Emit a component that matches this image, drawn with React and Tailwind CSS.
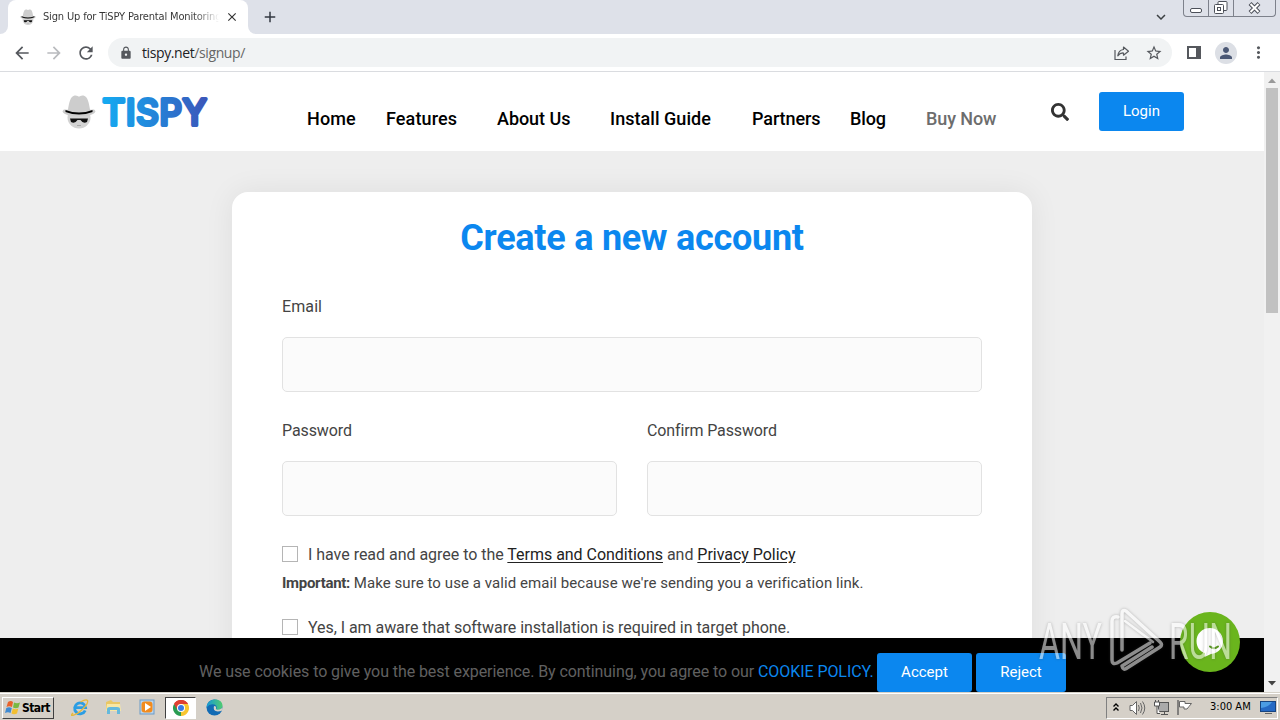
import React from 'react';
import { FaSearch } from 'react-icons/fa';
import { MdArrowBack, MdArrowForward, MdRefresh, MdLock, MdStarBorder, MdPerson, MdMoreVert, MdClose, MdAdd, MdKeyboardArrowDown } from 'react-icons/md';

function SpyFace({ className }) {
  return (
    <svg className={className} viewBox="0 0 34 34">
      <ellipse cx="17" cy="23" rx="11.500" ry="11" fill="#d3d3d3" />
      <path d="M0.5 17C2 13.500 4 16 6 15C7 9 8 2 12.500 1C15 .5 16 2 17 2C18 2 19 .5 21.500 1C26 2 27 9 28 15C30 16 32 13.500 33.500 17C31 23.500 3 23.500 .5 17Z" fill="#cdcdcd" />
      <path d="M3.500 15.500Q17 20.500 30.500 15.500V17.500Q17 22.500 3.500 17.500Z" fill="#000" />
      <path d="M8 24H26L25 27.500Q21 29.500 18.500 25.500H15.500Q13 29.500 9 27.500Z" fill="#111" />
      <path d="M15 31H19" stroke="#aaa" />
    </svg>
  );
}

function TabBar() {
  return (
    <div className="flex h-[34px] bg-[#dee1e9]">
      <div className="flex w-[8px] items-end bg-white"><div className="h-[34px] w-[8px] rounded-br-lg bg-[#dee1e9]" /></div>
      <div className="flex h-[34px] w-[240px] items-center rounded-t-lg bg-white pl-3">
        <SpyFace className="h-4 w-4 shrink-0" />
        <div className="ml-[7px] w-[176px] overflow-hidden whitespace-nowrap bg-gradient-to-r from-[#333] from-85% to-white bg-clip-text font-['DejaVu_Sans_Condensed','DejaVu_Sans',sans-serif] text-[11px] tracking-[-0.16px] text-transparent">
          Sign Up for TiSPY Parental Monitoring
        </div>
        <MdClose className="ml-[6px] h-[14px] w-[14px] text-[#333]" />
      </div>
      <div className="w-[8px] bg-white"><div className="h-[34px] w-[8px] rounded-bl-lg bg-[#dee1e9]" /></div>
      <MdAdd className="ml-[5px] mt-2 h-[18px] w-[18px] text-[#333842]" />
      <MdKeyboardArrowDown className="ml-auto mr-[13px] mt-2 h-[18px] w-[18px] text-[#3c4043]" />
      <div className="mr-[4px] flex h-[17px] w-[93px] rounded-b-[4px] border border-t-0 border-[#7d818b]">
        <div className="flex w-[25px] items-end justify-center border-r border-[#7d818b] pb-[3px]">
          <div className="h-[5px] w-[12px] rounded-[2px] border border-[#4c5059] bg-white" />
        </div>
        <div className="flex w-[25px] items-center justify-center border-r border-[#7d818b]">
          <svg className="h-[14px] w-[14px]" viewBox="0 0 14 14" fill="#fff" stroke="#4c5059">
            <rect x="4" y=".5" width="9" height="9" rx="1" /><rect x=".5" y="3.500" width="9" height="9" rx="1" /><rect x="3.500" y="6.500" width="3" height="3" />
          </svg>
        </div>
        <div className="flex flex-1 items-center justify-center">
          <svg className="h-[12px] w-[13px]" viewBox="0 0 13 12">
            <path d="M2 1.500L11 10.500M11 1.500L2 10.500" stroke="#4c5059" strokeWidth="4" />
            <path d="M2.500 2L10.500 10M10.500 2L2.500 10" stroke="#fff" strokeWidth="2" />
          </svg>
        </div>
      </div>
    </div>
  );
}

function Toolbar() {
  return (
    <div className="flex h-[38px] items-center border-b border-[#dadce0] bg-white pl-[12px] text-[#55585d]">
      <MdArrowBack className="h-5 w-5" />
      <MdArrowForward className="ml-3 h-5 w-5 text-[#b9bbbe]" />
      <MdRefresh className="ml-3 h-5 w-5" />
      <div className="ml-[12px] flex h-[29px] w-[1064px] items-center rounded-full bg-[#f1f3f4] pl-[11px] pr-[9px]">
        <MdLock className="h-[14px] w-[14px]" />
        <div className="ml-[9px] whitespace-nowrap font-['Open_Sans',sans-serif] text-[14px] tracking-[-0.4px] text-[#666]"><span className="text-[#202124]">tispy.net</span>/signup/</div>
        <svg className="ml-auto h-[16px] w-[16px]" viewBox="0 0 16 16" fill="none" stroke="currentColor" strokeWidth="1.200">
          <path d="M1 5V14.500H12V11.500" /><path d="M9.500 2L14.500 6.200L9.500 10.200V8Q6 7.700 3.800 10.800Q4.500 5 9.500 4.500Z" strokeLinejoin="round" />
        </svg>
        <MdStarBorder className="ml-[15px] h-[18px] w-[18px]" />
      </div>
      <div className="ml-[15px] h-[13px] w-[14px] border-2 border-r-[5px] border-[#55585d]" />
      <div className="ml-[14px] flex h-[22px] w-[22px] items-center justify-center rounded-full bg-[#dcdfe5]"><MdPerson className="h-[18px] w-[18px] text-[#4b5875]" /></div>
      <MdMoreVert className="ml-[12px] h-[19px] w-[19px]" />
    </div>
  );
}

function SiteHeader() {
  return (
    <header className="flex h-[79px] shrink-0 bg-white">
      <SpyFace className="ml-[62px] mt-[22px] h-[35px] w-[34px]" />
      <svg className="ml-[3px] mt-[20px] h-[44px] w-[114px] overflow-visible" viewBox="0 0 114 44">
        <defs><linearGradient id="logo" x1="0" x2="110" gradientUnits="userSpaceOnUse"><stop stopColor="#14adf3" /><stop offset=".45" stopColor="#2189dc" /><stop offset="1" stopColor="#3c54b8" /></linearGradient></defs>
        <text x="3.500" y="33" textLength="104" fontFamily="Inter, sans-serif" fontWeight="400" fontSize="35" fill="url(#logo)" stroke="url(#logo)" strokeWidth="4" strokeLinejoin="round" strokeLinecap="round">TISPY</text>
      </svg>
      <nav className="ml-[94px] mt-[33px] flex whitespace-nowrap text-[18px] font-medium leading-7 text-black">
        <a className="w-[79px] tracking-[0.12px]">Home</a>
        <a className="w-[111px] tracking-[0.12px]">Features</a>
        <a className="w-[113px] tracking-[-0.05px]">About Us</a>
        <a className="w-[142px] tracking-[0.04px]">Install Guide</a>
        <a className="w-[98px] tracking-[-0.1px]">Partners</a>
        <a className="w-[76px] tracking-[-0.1px]">Blog</a>
        <a className="w-[125px] tracking-[-0.1px] text-[#6d6d6d]">Buy Now</a>
      </nav>
      <FaSearch className="mt-[31px] h-[18px] w-[18px] text-[#333]" />
      <button className="ml-[30px] mt-[20px] h-[39px] w-[85px] rounded-[3px] bg-[#0b87ef] text-[15px] tracking-[0.05px] text-white">Login</button>
    </header>
  );
}

const field = 'h-[55px] rounded-[5px] border border-[#e2e2e2] bg-[#fbfbfb]';

function SignupCard() {
  return (
    <section className="mx-auto mt-[41px] h-[700px] w-[800px] rounded-[16px] bg-white px-[50px] pt-[24px] text-[16px] leading-6 text-[#444] shadow-[0_0_30px_rgba(0,0,0,0.07)]">
      <h1 className="whitespace-nowrap text-center text-[36px] font-bold leading-[44px] tracking-[-0.25px] text-[#0b87ef]">Create a new account</h1>
      <div className="mt-[35px] tracking-[0.1px]">Email</div>
      <div className={field + ' mt-[18px]'} />
      <div className="mt-[27px] grid grid-cols-2 gap-[30px]">
        <div><div className="tracking-[-0.1px]">Password</div><div className={field + ' mt-[18px]'} /></div>
        <div><div className="tracking-[-0.13px]">Confirm Password</div><div className={field + ' mt-[18px]'} /></div>
      </div>
      <div className="mt-[26px] flex items-center">
        <span className="h-[16px] w-[16px] border border-[#b5b5b5] bg-white" />
        <span className="ml-[10px] translate-y-px whitespace-nowrap tracking-[-0.025px]">I have read and agree to the <a className="text-[#222] underline underline-offset-2">Terms and Conditions</a> and <a className="text-[#222] underline underline-offset-2">Privacy Policy</a></span>
      </div>
      <p className="mt-[5px] whitespace-nowrap text-[15px] leading-6 tracking-[0.075px]"><b className="tracking-[-0.3px]">Important:</b> Make sure to use a valid email because we're sending you a verification link.</p>
      <div className="mt-[20px] flex items-center">
        <span className="h-[16px] w-[16px] border border-[#b5b5b5] bg-white" />
        <span className="ml-[10px] translate-y-px whitespace-nowrap tracking-[-0.05px]">Yes, I am aware that software installation is required in target phone.</span>
      </div>
    </section>
  );
}

function CookieBar() {
  return (
    <div className="flex h-[54px] shrink-0 bg-black pl-[199px] pt-[15px] text-[16px]">
      <div className="w-[678px] whitespace-nowrap leading-[38px] tracking-[-0.075px] text-[#606060]">We use cookies to give you the best experience. By continuing, you agree to our <a className="text-[#0b87ef]">COOKIE POLICY.</a></div>
      <button className="h-[39px] w-[95px] rounded-[3px] bg-[#0b87ef] text-[15px] text-white">Accept</button>
      <button className="ml-[4px] h-[39px] w-[90px] rounded-[3px] bg-[#0b87ef] text-[15px] text-white">Reject</button>
    </div>
  );
}

function Watermark() {
  return (
    <svg className="absolute left-[1032px] top-[600px] h-[80px] w-[208px] overflow-visible" viewBox="0 0 208 80" fontFamily="Roboto, sans-serif" fontWeight="400" fontSize="50" fill="#fff">
      <g opacity=".55" style={{ filter: 'drop-shadow(0 0 1.5px rgba(60,60,60,.6))' }}>
        <text x="7" y="59" textLength="63" lengthAdjust="spacingAndGlyphs">ANY</text>
        <text x="137" y="59" textLength="63" lengthAdjust="spacingAndGlyphs">RUN</text>
        <g fill="none" stroke="#fff" strokeWidth="3.500" strokeLinejoin="round" strokeLinecap="round">
          <path d="M86 17Q80 16 80 21V60Q80 65 85 63L118 43" />
          <path d="M90 50V14Q90 9 94 11L128 42Q131 45 128 47L95 68Q91 71 90 66L120 47" />
          <path d="M93 21L121 42" strokeWidth="2.500" />
        </g>
      </g>
    </svg>
  );
}

function Chat() {
  return (
    <div className="absolute left-[1180px] top-[612px] flex h-[60px] w-[60px] items-center justify-center rounded-full bg-[#6ab51d]">
      <svg className="h-[32px] w-[32px]" viewBox="0 0 32 32">
        <path d="M16 2C8 2 2.500 8 2.500 15C2.500 21 6 26 11 27L10.500 31L17 28C24 27.500 29 22 29 15C29 8 23 2 16 2Z" fill="#fff" />
        <path d="M16 20.500Q20 24 24 20.500" fill="none" stroke="#59991f" strokeWidth="2" strokeLinecap="round" />
      </svg>
    </div>
  );
}

function Scrollbar() {
  return (
    <div className="flex w-[16px] flex-col items-center bg-[#f1f1f1]">
      <svg className="h-[16px] w-[16px]" viewBox="0 0 16 16"><path d="M4 11H12L8 6.500Z" fill="#999" /></svg>
      <div className="h-[225px] w-[12px] bg-[#c1c1c1]" />
      <svg className="mt-auto h-[16px] w-[16px]" viewBox="0 0 16 16"><path d="M4 5H12L8 9.500Z" fill="#444" /></svg>
    </div>
  );
}

function Taskbar() {
  return (
    <footer className="flex h-[28px] items-center border-t border-[#d5d1c8] bg-[#d5d0c8] pl-[2px] font-['DejaVu_Sans_Condensed','DejaVu_Sans',sans-serif] text-black shadow-[inset_0_1px_0_#fff]">
      <div className="mt-[2px] flex h-[22px] w-[52px] items-center border border-b-[#404040] border-l-white border-r-[#404040] border-t-white pl-[2px]">
        <svg className="h-[16px] w-[16px]" viewBox="0 0 16 16">
          <path d="M3 2Q6 0 8 2L7 7Q4 5.500 1.500 7Z" fill="#e9622b" /><path d="M9 2.500Q12 4 15 2.500L13.500 7.500Q11 9 8 7.500Z" fill="#79b943" /><path d="M1.300 8Q4 6.500 6.800 8L5.500 13Q3 11.500 0 13Z" fill="#3f8ad2" /><path d="M7.800 8.500Q11 10 13.300 8.500L12 13.500Q9 15 6.500 13.500Z" fill="#f3bf31" />
        </svg>
        <b className="ml-px text-[12px] tracking-[-0.6px]">Start</b>
      </div>
      <svg className="ml-[17px] mt-[2px] h-[17px] w-[18px]" viewBox="0 0 18 17" fill="none">
        <path d="M14.200 11.500A5.500 5.500 0 1 1 14.600 8.700H4.500" stroke="#2b9de3" strokeWidth="2.800" /><path d="M2 14Q-1 17 1.500 16.500C8 15 18 5 16.500 1.500Q15 0 9.500 3" stroke="#e6b83b" strokeWidth="1.300" />
      </svg>
      <svg className="ml-[16px] mt-[2px] h-[17px] w-[17px]" viewBox="0 0 17 17">
        <path d="M1 3L6 1L8 3L15 3V12H1Z" fill="#e9c765" /><path d="M2 5H15L16 12H1Z" fill="#f8e7a4" /><path d="M2 15V10Q2 8 5 8H12Q15 8 15 10V15H12V11H5V15Z" fill="#65b9dc" />
      </svg>
      <svg className="ml-[17px] mt-[2px] h-[17px] w-[17px]" viewBox="0 0 17 17">
        <rect x="1" y="1" width="14" height="14" fill="#b9d4ec" stroke="#6c9bc7" /><rect x="2.500" y="2.500" width="11" height="11" rx="3" fill="#f28b1d" /><path d="M6 4L12 8L6 12Z" fill="#fff" />
      </svg>
      <div className="ml-[9px] mt-[2px] flex h-[22px] w-[31px] items-center justify-center border border-b-white border-l-[#404040] border-r-white border-t-[#404040] bg-white">
        <svg className="h-[16px] w-[16px]" viewBox="0 0 16 16">
          <path d="M8 8L1.070 4A8 8 0 0 1 14.930 4Z" fill="#df4032" /><path d="M8 8L14.930 4A8 8 0 0 1 8 16Z" fill="#f8c630" /><path d="M8 8V16A8 8 0 0 1 1.070 4Z" fill="#299c52" /><path d="M8 4H14.930L11.500 10L8 16L8 8Z" fill="#f8c630" /><path d="M1.070 4L4.500 10H8V4H15A8 8 0 0 0 1.070 4Z" fill="#df4032" /><circle cx="8" cy="8" r="4" fill="#fff" /><circle cx="8" cy="8" r="3" fill="#397be5" />
        </svg>
      </div>
      <svg className="ml-[10px] mt-[2px] h-[17px] w-[17px]" viewBox="0 0 17 17">
        <defs><linearGradient id="edge"><stop stopColor="#1798d6" /><stop offset="1" stopColor="#50cb70" /></linearGradient></defs>
        <circle cx="8.500" cy="8.500" r="8" fill="#126bb4" /><path d="M.5 8.500C1-2 17-2 16.500 7C16 11 11 11.500 10 10.500Q12 7 8.500 5.500Q4 4 .5 8.500Z" fill="url(#edge)" /><path d="M8 7Q6 14 15.500 12Q17 10 16.500 8C15 11.500 9 11.500 10 9Q10.500 7 8 7Z" fill="#d5d0c8" />
      </svg>
      <div className="ml-auto mr-[2px] mt-[2px] flex h-[22px] w-[172px] items-center border border-b-white border-l-[#808080] border-r-white border-t-[#808080]">
        <svg className="ml-[5px] h-[11px] w-[8px]" viewBox="0 0 8 11" fill="none" stroke="#000" strokeWidth="1.400"><path d="M1.500 4.500L4 2L6.500 4.500M1.500 8.500L4 6L6.500 8.500" /></svg>
        <svg className="ml-[9px] h-[16px] w-[17px]" viewBox="0 0 17 16" fill="#fff" stroke="#666"><path d="M1 5.500H3.500L7.500 1.500V14.500L3.500 10.500H1Z" /><path d="M9.500 5Q11 8 9.500 11M11.500 3Q14.500 8 11.500 13M13.500 1.500Q18 8 13.500 14.500" fill="none" /></svg>
        <svg className="ml-[7px] h-[17px] w-[17px]" viewBox="0 0 17 17" fill="#fff" stroke="#555"><rect x="5.500" y="3.500" width="10" height="9" fill="#aaa" /><path d="M8 15.500H15M11.500 13V15" /><path d="M1.500 3V7H6.500V3ZM2.500 1V3M5.500 1V3M4 7V14.500H7" /></svg>
        <svg className="ml-[7px] h-[17px] w-[16px]" viewBox="0 0 16 17" fill="#fff" stroke="#666"><path d="M1 1V16" strokeWidth="1.500" /><path d="M2.500 2.500H8V4.500H14.500L12 7.500L10 10H7V8H2.500Z" /></svg>
        <span className="ml-[17px] whitespace-nowrap text-[11px]">3:00 AM</span>
        <svg className="ml-auto mr-[1px] h-[15px] w-[16px]" viewBox="0 0 16 15"><rect x=".5" y="1.500" width="15" height="10" fill="#2569c4" stroke="#174480" /><path d="M1 2H12Q9 7 1 8Z" fill="#4b9ce4" /><path d="M5 13.500H12" stroke="#666" /></svg>
      </div>
    </footer>
  );
}

export default function App() {
  return (
    <div className="relative flex h-[720px] w-[1280px] flex-col overflow-hidden font-['Roboto',sans-serif]">
      <TabBar />
      <Toolbar />
      <div className="flex h-[620px]">
        <main className="flex w-[1264px] flex-col bg-[#eeeeee]">
          <SiteHeader />
          <div className="h-[487px] overflow-hidden"><div className="flow-root"><SignupCard /></div></div>
          <CookieBar />
        </main>
        <Scrollbar />
      </div>
      <Taskbar />
      <Chat />
      <Watermark />
    </div>
  );
}
